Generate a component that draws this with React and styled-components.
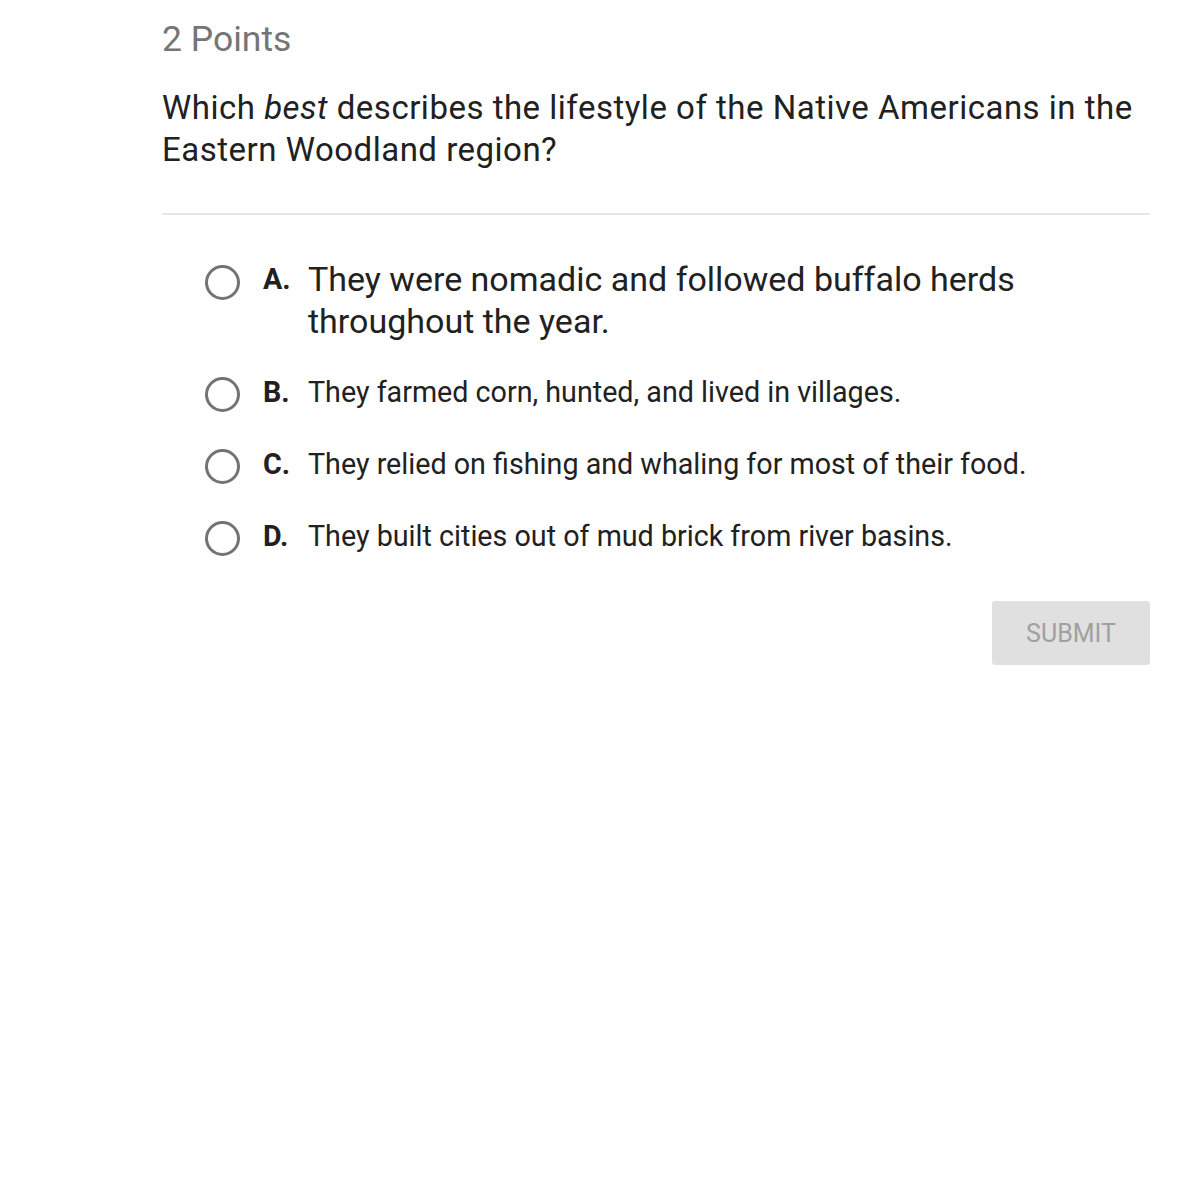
import React from "react";
import styled, { createGlobalStyle } from "styled-components";

const GlobalStyle = createGlobalStyle`
    body {
        margin: 0;
        background: #ffffff;
        font-family: Roboto, "Liberation Sans", sans-serif;
    }
`

const Page = styled.div`
    width: 988px;
    margin-left: 162px;
    padding-top: 19px;
`

const Points = styled.div`
    font-size: 35.5px;
    line-height: 41px;
    color: #757575;
`

const Question = styled.div`
    margin-top: 27px;
    font-size: 33px;
    line-height: 42px;
    letter-spacing: 0.5px;
    color: #212121;
    em {
        font-style: italic;
    }
`

const Divider = styled.hr`
    margin: 42px 0 0 0;
    border: none;
    border-top: 2px solid #e6e6e6;
`

const Options = styled.div`
    display: flex;
    flex-direction: column;
    gap: 34px;
    margin-top: 43px;
    padding-left: 43px;
`

const Option = styled.div`
    display: flex;
    align-items: flex-start;
    font-size: ${(p) => (p.$large ? "34px" : "28.7px")};
    line-height: ${(p) => (p.$large ? "42px" : "36px")};
    margin-bottom: ${(p) => (p.$large ? "-2px" : "0")};
    color: #212121;
`

const RadioWrap = styled.div`
    flex: none;
    height: ${(p) => (p.$large ? "42px" : "36px")};
    display: flex;
    align-items: center;
    margin-top: ${(p) => (p.$large ? "3px" : "2px")};
`

const Radio = styled.span`
    display: block;
    width: 35px;
    height: 35px;
    box-sizing: border-box;
    border: 3px solid #737373;
    border-radius: 50%;
`

const Letter = styled.span`
    flex: none;
    width: 45px;
    margin-left: 23px;
    font-size: 28.7px;
    font-weight: 700;
`

const Text = styled.span`
    flex: 1;
`

const Actions = styled.div`
    display: flex;
    justify-content: flex-end;
    margin-top: 45px;
`

const SubmitButton = styled.button`
    width: 158px;
    height: 64px;
    border: none;
    border-radius: 3px;
    background: #e0e0e0;
    color: #a0a0a0;
    font-family: Roboto, "Liberation Sans", sans-serif;
    font-size: 25px;
`

const choices = [
    { letter: "A.", text: "They were nomadic and followed buffalo herds throughout the year.", large: true },
    { letter: "B.", text: "They farmed corn, hunted, and lived in villages." },
    { letter: "C.", text: "They relied on fishing and whaling for most of their food." },
    { letter: "D.", text: "They built cities out of mud brick from river basins." },
];

function App() {
    return (
        <Page>
            <GlobalStyle />
            <Points>2 Points</Points>
            <Question>
                Which <em>best</em> describes the lifestyle of the Native Americans in the Eastern Woodland region?
            </Question>
            <Divider />
            <Options>
                {choices.map((c) => (
                    <Option key={c.letter} $large={c.large}>
                        <RadioWrap $large={c.large}>
                            <Radio />
                        </RadioWrap>
                        <Letter>{c.letter}</Letter>
                        <Text style={c.large ? { maxWidth: 730 } : undefined}>{c.text}</Text>
                    </Option>
                ))}
            </Options>
            <Actions>
                <SubmitButton>SUBMIT</SubmitButton>
            </Actions>
        </Page>
    );
}

export default App;
